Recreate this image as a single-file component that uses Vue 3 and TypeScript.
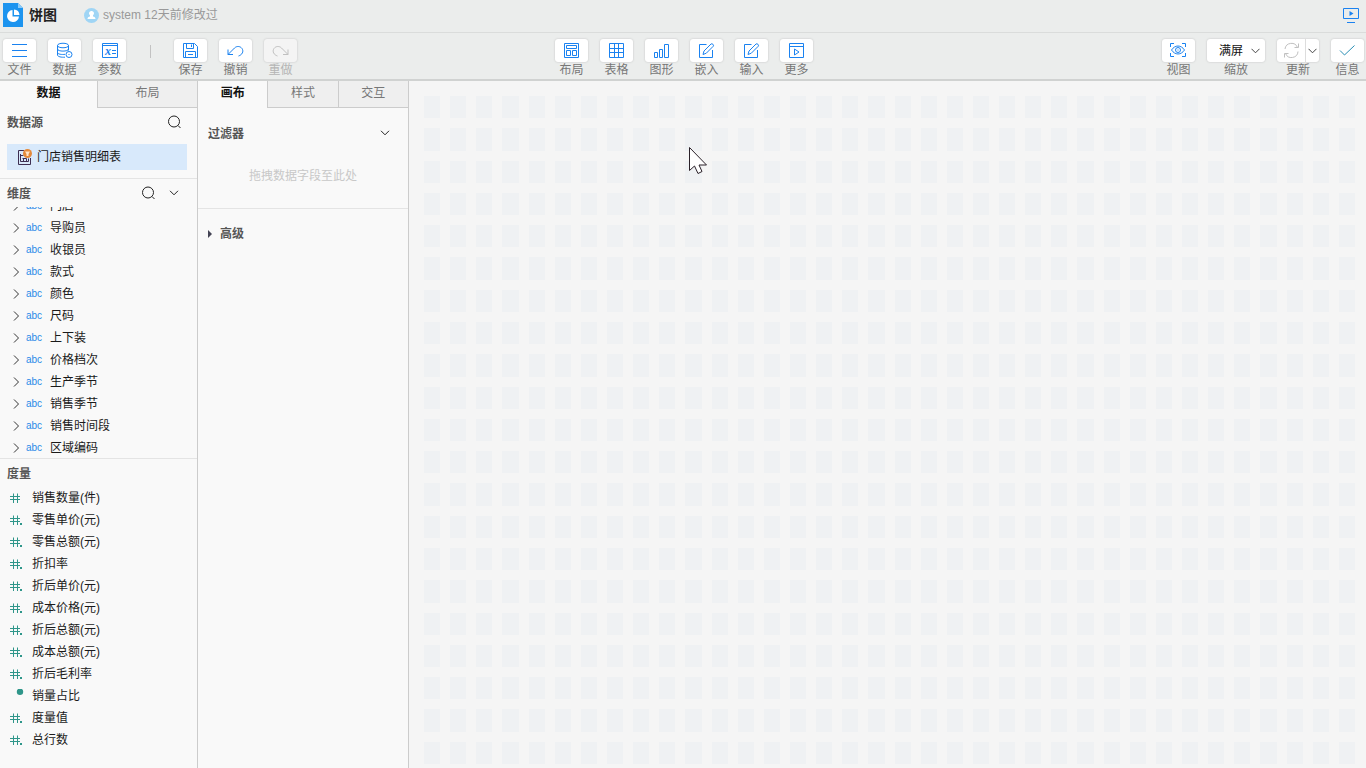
<script setup lang="ts">
import { ref } from 'vue'

interface Tool {
  id: string
  label: string
  paths: string[]
  disabled?: boolean
  variable?: boolean
}

const pencil = [
  'M8.5 2.5h-7v13h13V8',
  'M5 12.5l1-3.5 7-7c1-1 3.300 1 2.300 2.200l-7 7z',
]

const fileTools: Tool[] = [
  { id: 'file', label: '文件', paths: ['M1 2.500h15M1 8.500h15M1 14.500h15'] },
  {
    id: 'data',
    label: '数据',
    paths: [
      'M1.500 3.500c0-3 11-3 11 0s-11 3-11 0z',
      'M1.500 3.500v9.500c0 1.700 4 2.500 7.500 2.200M12.500 3.500v5',
      'M1.500 7c0 2.800 11 2.800 11 0M1.500 10.300c0 2 4.500 2.500 7.500 2',
      'M10 12.500a3 3 0 1 0 6 0a3 3 0 1 0-6 0zM12.500 12.500h1',
    ],
  },
  { id: 'param', label: '参数', paths: ['M1.500 1.500h15v14h-15zM1.500 3.500h15', 'M11 8.500h4M11 11.500h4'], variable: true },
]
const editTools: Tool[] = [
  { id: 'save', label: '保存', paths: ['M1.500 1.500h11l3 3v11h-14zM4.500 1.500v5h7v-5M9.500 2.500v2.500M3.500 15v-5.500h10V15M6 12.500h5'] },
  { id: 'undo', label: '撤销', paths: ['M1 7.500v5h5M1 12.500l6.500-6.500c2-2 5.500-2.200 7.500.5c2 3 .2 6.300-3.500 7.500'] },
  { id: 'redo', label: '重做', paths: ['M16 7.500v5h-5M16 12.500l-6.500-6.500c-2-2-5.500-2.200-7.500.5c-2 3-.2 6.300 3.500 7.500'], disabled: true },
]
const insertTools: Tool[] = [
  { id: 'layout', label: '布局', paths: ['M1.500 1.500h14v14h-14zM3.500 3.500h10v3h-10zM3.500 8.500h4v5h-4zM9.500 8.500h4v5h-4z'] },
  { id: 'table', label: '表格', paths: ['M1.500 1.500h14v14h-14zM1.500 6.500h14M1.500 10.500h14M6.500 1.500v14M10.500 1.500v14'] },
  { id: 'chart', label: '图形', paths: ['M1.500 10.500h3v5h-3zM6.500 7.500h3v8h-3zM11.500 2.500h4v13h-4z'] },
  { id: 'embed', label: '嵌入', paths: pencil },
  { id: 'input', label: '输入', paths: pencil },
  { id: 'more', label: '更多', paths: ['M1.500 1.500h14v14h-14zM1.500 4.500h14M6.500 7v6l4.500-3z'] },
]
const viewTool: Tool = {
  id: 'view',
  label: '视图',
  paths: [
    'M.5 5V1.500H4M12 1.500h3.500V5M.5 11v3.500H4M12 14.500h3.500V11',
    'M1.500 8c3.500-5.300 9.500-5.300 13 0c-3.500 5.300-9.500 5.300-13 0z',
    'M5.500 8a2.500 2.500 0 1 0 5 0a2.500 2.500 0 1 0-5 0zM7.500 8h1',
  ],
}
const infoTool: Tool = { id: 'info', label: '信息', paths: ['M1 8.500L5.500 13 15.500 3.500'] }

const groups: { name: string; tools: Tool[] }[] = [
  { name: 'start', tools: fileTools },
  { name: 'edit', tools: editTools },
]

const dimensions = ['门店', '导购员', '收银员', '款式', '颜色', '尺码', '上下装', '价格档次', '生产季节', '销售季节', '销售时间段', '区域编码']

type Mark = 'int' | 'decimal' | 'dot'
const measures: { name: string; mark: Mark }[] = [
  { name: '销售数量(件)', mark: 'int' },
  { name: '零售单价(元)', mark: 'decimal' },
  { name: '零售总额(元)', mark: 'decimal' },
  { name: '折扣率', mark: 'decimal' },
  { name: '折后单价(元)', mark: 'decimal' },
  { name: '成本价格(元)', mark: 'decimal' },
  { name: '折后总额(元)', mark: 'decimal' },
  { name: '成本总额(元)', mark: 'decimal' },
  { name: '折后毛利率', mark: 'decimal' },
  { name: '销量占比', mark: 'dot' },
  { name: '度量值', mark: 'decimal' },
  { name: '总行数', mark: 'decimal' },
]

const dataTabs = ['数据', '布局']
const canvasTabs = ['画布', '样式', '交互']
const dataTab = ref('数据')
const canvasTab = ref('画布')
const zoom = ref('满屏')
const cellCount = 36 * 21
</script>

<template>
  <div class="app">
    <header class="titlebar">
      <svg class="logo" width="20" height="24" viewBox="0 0 20 24">
        <path d="M0 0h15l5 5v19H0z" fill="#1c94ef" />
        <path d="M15 0l5 5h-5z" fill="#8ccbf8" />
        <path d="M9.500 7a6 6 0 1 0 6.500 6.500H9.500z" fill="#fff" />
        <path d="M11 6.500a6 6 0 0 1 5.500 5.500H11z" fill="#fff" />
      </svg>
      <h1>饼图</h1>
      <svg class="avatar" width="15" height="15" viewBox="0 0 15 15">
        <circle cx="7.500" cy="7.500" r="7.500" fill="#9fd5f5" />
        <path d="M7.500 3a2.300 2.300 0 0 1 1.500 4.200v1.200c1.500.3 2.500.9 2.500 2.600h-8c0-1.700 1-2.300 2.500-2.600V7.200A2.300 2.300 0 0 1 7.500 3z" fill="#fff" />
      </svg>
      <span class="meta">system 12天前修改过</span>
      <button class="plain present" type="button" aria-label="预览">
        <svg width="17" height="16" viewBox="0 0 17 16" fill="none" stroke="#1a82f0">
          <path d="M.5 1.500h15v10H.5zM4 15.500h8" />
          <path d="M6.500 4v5l4-2.500z" fill="#1a82f0" stroke="none" />
        </svg>
      </button>
    </header>

    <div class="toolbar" role="toolbar">
      <div class="cluster left">
        <template v-for="(group, index) in groups" :key="group.name">
          <i v-if="index > 0" class="separator"></i>
          <div v-for="tool in group.tools" :key="tool.id" class="tool" :class="{ off: tool.disabled }">
            <button :id="tool.id" class="face" type="button" :disabled="tool.disabled">
              <svg class="glyph" width="17" height="17" viewBox="0 0 17 17">
                <path v-for="d in tool.paths" :key="d" :d="d" />
                <text v-if="tool.variable" x="4" y="13">x</text>
              </svg>
            </button>
            <label :for="tool.id">{{ tool.label }}</label>
          </div>
        </template>
      </div>

      <div class="cluster">
        <div v-for="tool in insertTools" :key="tool.id" class="tool">
          <button :id="tool.id" class="face" type="button">
            <svg class="glyph" width="17" height="17" viewBox="0 0 17 17">
              <path v-for="d in tool.paths" :key="d" :d="d" />
            </svg>
          </button>
          <label :for="tool.id">{{ tool.label }}</label>
        </div>
      </div>

      <div class="cluster right">
        <div class="tool">
          <button :id="viewTool.id" class="face" type="button">
            <svg class="glyph" width="17" height="17" viewBox="0 0 17 17">
              <path v-for="d in viewTool.paths" :key="d" :d="d" />
            </svg>
          </button>
          <label :for="viewTool.id">{{ viewTool.label }}</label>
        </div>
        <div class="tool">
          <div class="face zoom">
            <select id="zoom" v-model="zoom">
              <option>满屏</option>
            </select>
            <svg class="arrow" width="9" height="6" viewBox="0 0 9 6"><path d="M.5.8l4 4 4-4" /></svg>
          </div>
          <label for="zoom">缩放</label>
        </div>
        <div class="tool">
          <div class="face split">
            <button id="refresh" class="plain main" type="button">
              <svg class="glyph idle" width="17" height="17" viewBox="0 0 17 17">
                <path d="M2 7A6.500 6.500 0 0 1 14.500 5.500M15 9.500A6.500 6.500 0 0 1 2.500 11.500M15.500 1.500v4h-4M1.500 15.500v-4h4" />
              </svg>
            </button>
            <button class="plain side" type="button" aria-label="更新选项">
              <svg class="arrow" width="9" height="6" viewBox="0 0 9 6"><path d="M.5.8l4 4 4-4" /></svg>
            </button>
          </div>
          <label for="refresh">更新</label>
        </div>
        <div class="tool">
          <button :id="infoTool.id" class="face" type="button">
            <svg class="glyph" width="17" height="17" viewBox="0 0 17 17">
              <path v-for="d in infoTool.paths" :key="d" :d="d" class="check" />
            </svg>
          </button>
          <label :for="infoTool.id">{{ infoTool.label }}</label>
        </div>
      </div>
    </div>

    <div class="workspace">
      <aside class="panel data-panel">
        <div class="tabs" role="tablist">
          <button
            v-for="tab in dataTabs"
            :key="tab"
            type="button"
            role="tab"
            :aria-selected="tab === dataTab"
            :class="{ active: tab === dataTab }"
            @click="dataTab = tab"
          >{{ tab }}</button>
        </div>

        <section class="sources">
          <div class="heading">
            <h2>数据源</h2>
            <button class="plain" type="button" aria-label="搜索数据源">
              <svg class="dark" width="14" height="14" viewBox="0 0 14 14"><circle cx="7" cy="6.500" r="5.500" /><path d="M11 10.500l2.500 2.500" /></svg>
            </button>
            <i class="slot"></i>
          </div>
          <button class="source" type="button">
            <svg width="15" height="16" viewBox="0 0 15 16" fill="none" stroke="#3d2f52">
              <path d="M7 1.500H1.500v14h12V9M3.500 5v7.500h8V9.500M3.500 6.500h3M5.500 9.500h4M6.500 9.500v3M9.500 9.500v3" />
              <circle cx="10.500" cy="4.500" r="4.500" fill="#e48a3a" stroke="none" />
              <path d="M8 2.500h5l-1.500 2.500v2h-2V5z" fill="#ffe6c8" stroke="none" />
            </svg>
            门店销售明细表
          </button>
        </section>

        <section class="dimensions">
          <div class="heading">
            <h2>维度</h2>
            <button class="plain" type="button" aria-label="搜索维度">
              <svg class="dark" width="14" height="14" viewBox="0 0 14 14"><circle cx="7" cy="6.500" r="5.500" /><path d="M11 10.500l2.500 2.500" /></svg>
            </button>
            <button class="plain slot" type="button" aria-label="维度菜单">
              <svg class="dark" width="10" height="6" viewBox="0 0 10 6"><path d="M1 .8l4 4 4-4" /></svg>
            </button>
          </div>
          <ul>
            <li v-for="name in dimensions" :key="name">
              <svg class="expand" width="7" height="10" viewBox="0 0 7 10"><path d="M1 .5L5.500 5 1 9.500" /></svg>
              <span class="type">abc</span>
              <span>{{ name }}</span>
            </li>
          </ul>
        </section>

        <section class="measures">
          <div class="heading"><h2>度量</h2></div>
          <ul>
            <li v-for="item in measures" :key="item.name">
              <svg class="hash" width="14" height="14" viewBox="0 0 14 14">
                <circle v-if="item.mark === 'dot'" cx="10" cy="2.800" r="3.200" />
                <path v-else d="M0 5.500h10M0 8.500h10M3.500 2.500v9.500M7.500 2.500v9.500" />
                <rect v-if="item.mark === 'decimal'" x="10" y="10" width="2" height="2" />
              </svg>
              <span>{{ item.name }}</span>
            </li>
          </ul>
        </section>
      </aside>

      <aside class="panel canvas-panel">
        <div class="tabs" role="tablist">
          <button
            v-for="tab in canvasTabs"
            :key="tab"
            type="button"
            role="tab"
            :aria-selected="tab === canvasTab"
            :class="{ active: tab === canvasTab }"
            @click="canvasTab = tab"
          >{{ tab }}</button>
        </div>
        <section class="filter">
          <div class="filter-head">
            <h2>过滤器</h2>
            <button class="plain" type="button" aria-label="过滤器菜单">
              <svg class="dark" width="10" height="6" viewBox="0 0 10 6"><path d="M1 .8l4 4 4-4" /></svg>
            </button>
          </div>
          <p class="drop">拖拽数据字段至此处</p>
        </section>
        <button class="plain advanced" type="button">
          <svg width="4" height="8" viewBox="0 0 4 8"><path d="M0 0l4 4-4 4z" fill="#445" /></svg>
          高级
        </button>
      </aside>

      <main class="stage">
        <div class="cells">
          <i v-for="n in cellCount" :key="n"></i>
        </div>
        <svg class="pointer" width="19" height="28" viewBox="0 0 19 28">
          <path d="M.5.5v23l5-4.500 3.500 7.500 4-2-3-6.500h7.500z" fill="#fff" stroke="#2a2028" />
        </svg>
      </main>
    </div>
  </div>
</template>

<style>
body {
  margin: 0;
}
</style>

<style scoped>
.app {
  display: flex;
  flex-direction: column;
  height: 100vh;
  overflow: hidden;
  background: #f5f5f5;
  color: #1a1a1a;
  font: 12px/16px "Liberation Sans", "Noto Sans CJK SC", sans-serif;
}

.app *,
.app *::before {
  box-sizing: border-box;
}

button,
select {
  margin: 0;
  color: inherit;
  font: inherit;
}

svg {
  display: block;
  flex: none;
}

h1,
h2,
p,
ul {
  margin: 0;
  padding: 0;
}

.plain {
  display: flex;
  align-items: center;
  justify-content: center;
  padding: 0;
  border: 0;
  background: none;
}

.titlebar {
  display: flex;
  flex: none;
  align-items: center;
  height: 33px;
  padding: 0 6px 2px 3px;
  border-bottom: 1px solid #dadcdb;
  background: #ebedec;
}

h1 {
  margin: 0 27px 0 6px;
  color: #222;
  font-size: 14px;
  line-height: 20px;
}

.meta {
  margin-left: 4px;
  color: #999;
}

.present {
  margin-left: auto;
}

.toolbar {
  display: grid;
  flex: none;
  grid-template-columns: 1fr auto 1fr;
  height: 48px;
  padding: 6px 1px 0 3px;
  border-bottom: 2px solid #d0d2d1;
  background: #ebedec;
}

.cluster {
  display: flex;
  gap: 12px;
}

.right {
  justify-content: flex-end;
  padding-right: 1px;
}

.tool {
  display: flex;
  flex-direction: column;
  align-items: center;
  color: #777;
}

.off {
  color: #b5b5b5;
}

.face {
  display: flex;
  align-items: center;
  justify-content: center;
  width: 33px;
  height: 23px;
  padding: 0;
  border: 0;
  border-radius: 3px;
  background: #fff;
  box-shadow: 0 0 2px #bbb;
}

.off .face {
  background: #f4f4f4;
}

.glyph {
  fill: none;
  stroke: #1a82f0;
}

.glyph text {
  fill: #1a82f0;
  stroke: none;
  font: italic bold 12px "Liberation Serif", serif;
}

.glyph .check {
  stroke: #2a8fb5;
}

.off .glyph,
.glyph.idle {
  stroke: #c0c0c0;
}

.separator {
  width: 1px;
  height: 13px;
  margin: 6px 11px 0 12px;
  background: #c2c2c2;
}

.zoom {
  position: relative;
  width: 58px;
}

.zoom select {
  width: 100%;
  height: 100%;
  padding: 0 12px;
  border: 0;
  background: none;
  color: #111;
  appearance: none;
}

.arrow {
  fill: none;
  stroke: #444;
}

.zoom .arrow {
  position: absolute;
  right: 5px;
  pointer-events: none;
}

.split {
  width: 42px;
}

.main {
  flex: 1;
  height: 100%;
}

.side {
  width: 14px;
  height: 100%;
  border-left: 1px solid #ddd;
}

.workspace {
  display: flex;
  flex: 1;
  min-height: 0;
}

.panel {
  display: flex;
  flex: none;
  flex-direction: column;
  border-right: 1px solid #ccc;
  background: #f9f9f9;
}

.data-panel {
  width: 198px;
}

.canvas-panel {
  width: 211px;
}

.tabs {
  display: flex;
  flex: none;
  height: 27px;
}

.tabs button {
  flex: 1;
  padding: 0 0 2px;
  border: 0;
  border-bottom: 1px solid #ccc;
  border-left: 1px solid #ccc;
  background: #efefef;
  color: #777;
}

.tabs .active {
  border-color: transparent;
  border-left: 0;
  background: none;
  color: #111;
  font-weight: bold;
}

.data-panel .tabs {
  display: grid;
  grid-template-columns: 97px 1fr;
}

h2 {
  padding-top: 2px;
  color: #555;
  font-size: 12px;
  font-weight: bold;
  line-height: 16px;
}

.heading {
  display: flex;
  flex: none;
  align-items: center;
  height: 28px;
  padding: 0 16px 0 7px;
}

.heading h2 {
  margin-right: auto;
}

.slot {
  width: 14px;
  margin-left: 12px;
}

.dark {
  fill: none;
  stroke: #222;
}

.sources {
  flex: none;
  padding-bottom: 8px;
  border-bottom: 1px solid #e4e4e4;
}

.sources .slot {
  display: none;
}

.source {
  display: flex;
  align-items: center;
  gap: 5px;
  width: 180px;
  height: 26px;
  margin: 8px 7px 0;
  padding: 0 10px;
  border: 0;
  background: #d8e9fb;
}

.dimensions {
  display: flex;
  flex: none;
  flex-direction: column;
  height: 280px;
  border-bottom: 1px solid #e4e4e4;
}

.dimensions ul {
  display: flex;
  flex: 1;
  flex-direction: column;
  justify-content: flex-end;
  min-height: 0;
  margin-bottom: -1px;
  overflow: hidden;
}

li {
  display: flex;
  flex: none;
  align-items: center;
  height: 22px;
  list-style: none;
}

.dimensions li {
  padding-left: 13px;
}

.expand {
  fill: none;
  stroke: #333;
}

.type {
  width: 24px;
  margin-left: 6px;
  color: #2a8ae8;
  font-size: 10px;
}

.measures .heading {
  height: 28px;
}

.measures li {
  padding-left: 10px;
}

.hash {
  margin-right: 8px;
  fill: #2f968a;
  stroke: none;
}

.hash path {
  stroke: #2f968a;
}

.filter {
  flex: none;
  height: 101px;
  border-bottom: 1px solid #e4e4e4;
}

.filter-head {
  display: flex;
  align-items: center;
  justify-content: space-between;
  padding: 16px 18px 0 10px;
}

.drop {
  padding-top: 26px;
  color: #c8c8c8;
  text-align: center;
}

.advanced {
  align-self: flex-start;
  gap: 8px;
  margin: 17px 0 0 10px;
  color: #555;
  font-weight: bold;
}

.stage {
  position: relative;
  flex: 1;
  min-width: 0;
  padding: 15px 11px 4px 15px;
  background: #f5f5f5;
}

.cells {
  display: grid;
  grid-template-rows: repeat(21, 1fr);
  grid-template-columns: repeat(36, 1fr);
  gap: 10px;
  height: 100%;
}

.cells i {
  background: #eff1f3;
}

.pointer {
  position: absolute;
  top: 66px;
  left: 280px;
}
</style>
